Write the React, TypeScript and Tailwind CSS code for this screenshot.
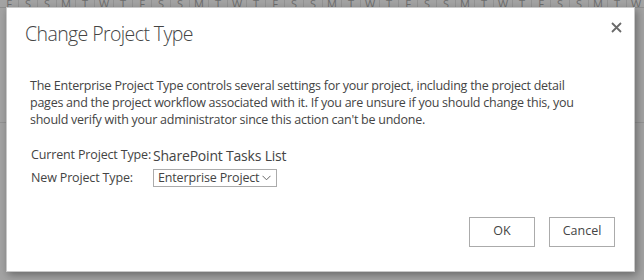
import React from "react";

const days = ["F", "S", "S", "M", "T", "W", "T"];

export default function App() {
  const cells = Array.from({ length: 35 }, (_, i) => days[i % 7]);

  return (
    <div
      className="relative w-[644px] h-[280px] overflow-hidden bg-[#a3a3a3]"
      style={{ fontFamily: '"Open Sans", "Noto Sans", sans-serif' }}
    >
      {/* calendar header behind the overlay */}
      <div className="flex h-[8px] overflow-hidden border-b border-[#8f8f8f]">
        {cells.map((d, i) => (
          <div
            key={i}
            className="w-[19px] shrink-0 border-r border-[#939393] text-center text-[11px] leading-[8px] text-[#6d6d6d]"
          >
            {d}
          </div>
        ))}
      </div>
      <div className="mt-[114px] h-px bg-[#939393]" />

      {/* dialog */}
      <div className="absolute left-[6px] top-[7px] w-[629px] h-[265px] bg-white border border-[#c8c8c8] shadow-[2px_3px_8px_rgba(0,0,0,0.35)] text-[#444]">
        <div className="flex items-start justify-between pl-[18px] pr-[12px] pt-[12px]">
          <h1 className="text-[19.5px] font-light leading-[28px] tracking-[-0.6px] text-[#444]">Change Project Type</h1>
          <button className="mt-[2px]">
            <svg width="11" height="11" viewBox="0 0 11 11">
              <path d="M1 1 L10 10 M10 1 L1 10" stroke="#6a6a6a" strokeWidth="1.8" />
            </svg>
          </button>
        </div>

        <div className="pl-[23px] pt-[29px] text-[12.5px] leading-[17px] tracking-[-0.25px]">
          <p>The Enterprise Project Type controls several settings for your project, including the project detail</p>
          <p>pages and the project workflow associated with it. If you are unsure if you should change this, you</p>
          <p>should verify with your administrator since this action can't be undone.</p>
        </div>

        <div className="pl-[24px] pt-[17px] text-[12.5px] tracking-[-0.15px] whitespace-nowrap">
          <div className="flex items-center h-[20px]">
            <span className="w-[122px]">Current Project Type:</span>
            <span className="text-[14px] tracking-[-0.2px]">SharePoint Tasks List</span>
          </div>
          <div className="flex items-center mt-[4px]">
            <span className="w-[122px]">New Project Type:</span>
            <div className="flex items-center h-[18px] w-[124px] border border-[#ababab] pl-[4px] pr-[5px] justify-between text-[12.5px] text-[#444]">
              <span>Enterprise Project</span>
              <svg width="9" height="6" viewBox="0 0 9 6">
                <path d="M0.5 0.8 L4.5 4.8 L8.5 0.8" fill="none" stroke="#666" strokeWidth="1" />
              </svg>
            </div>
          </div>
        </div>

        <div className="flex justify-end gap-[14px] pr-[19px] pt-[29px]">
          <button className="w-[66px] h-[30px] border border-[#ababab] bg-white text-[12.5px] text-[#444]">OK</button>
          <button className="w-[66px] h-[30px] border border-[#ababab] bg-white text-[12.5px] text-[#444]">Cancel</button>
        </div>
      </div>
    </div>
  );
}
